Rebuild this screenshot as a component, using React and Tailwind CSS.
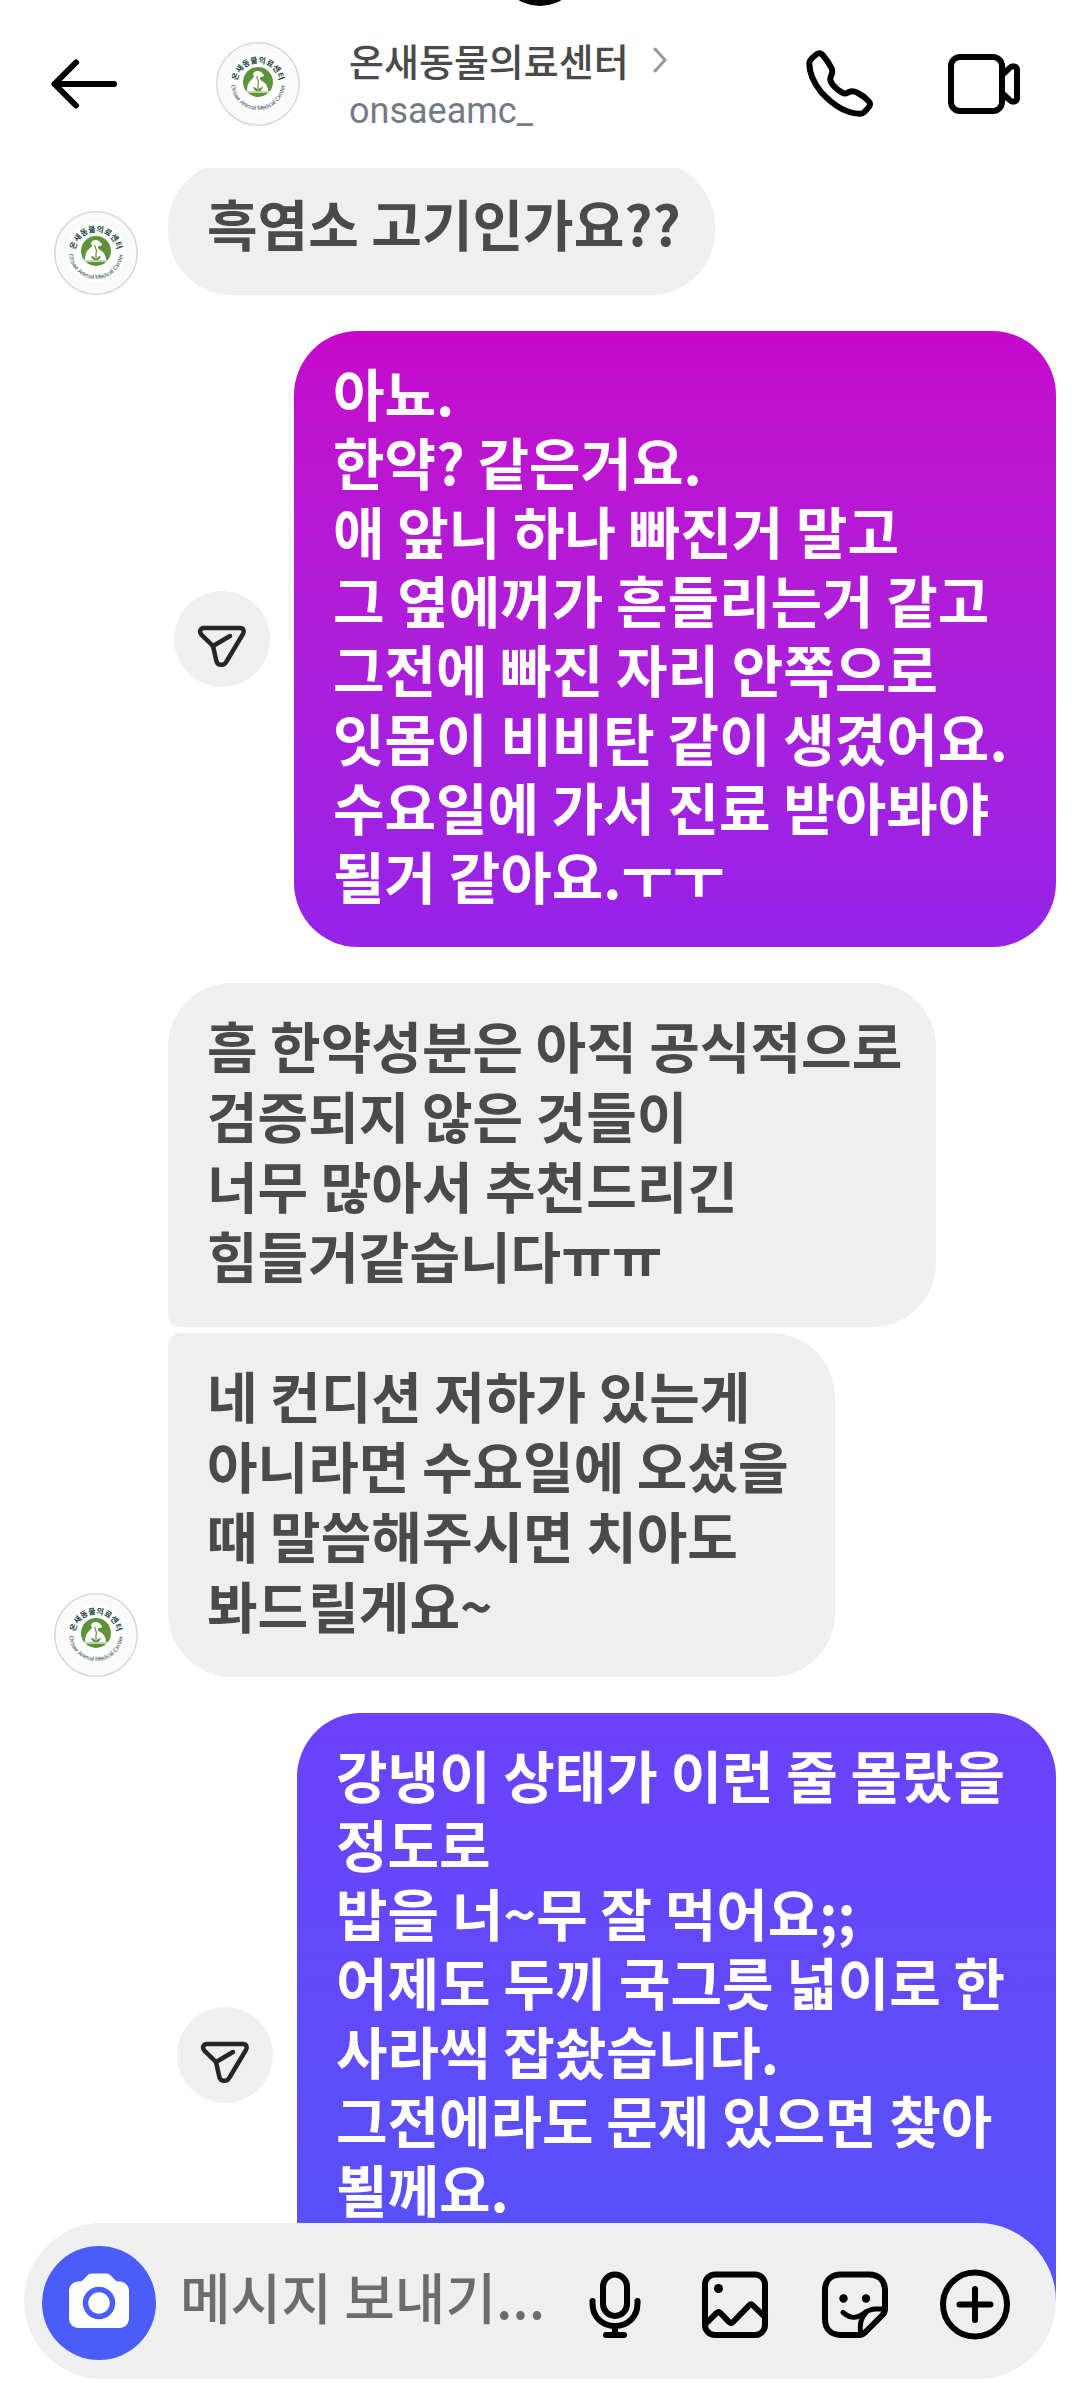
import React, { useState } from 'react';

const messages = [
  {
    id: 1,
    from: 'them',
    avatar: true,
    shape: 'rounded-[64px] leading-[69px]',
    text: '흑염소 고기인가요??',
  },
  {
    id: 2,
    from: 'me',
    shape: 'min-w-[762px] rounded-[64px] from-[#c507cb] to-[#9622e8]',
    text: '아뇨.\n한약? 같은거요.\n애 앞니 하나 빠진거 말고\n그 옆에꺼가 흔들리는거 같고\n그전에 빠진 자리 안쪽으로\n잇몸이 비비탄 같이 생겼어요.\n수요일에 가서 진료 받아봐야\n될거 같아요.ㅜㅜ',
  },
  {
    id: 3,
    from: 'them',
    shape: 'rounded-[64px] rounded-bl-xl leading-[70px]',
    text: '흠 한약성분은 아직 공식적으로\n검증되지 않은 것들이\n너무 많아서 추천드리긴\n힘들거같습니다ㅠㅠ',
  },
  {
    id: 4,
    from: 'them',
    avatar: true,
    joined: true,
    shape: 'min-w-[667px] rounded-[64px] rounded-tl-xl leading-[70px]',
    text: '네 컨디션 저하가 있는게\n아니라면 수요일에 오셨을\n때 말씀해주시면 치아도\n봐드릴게요~',
  },
  {
    id: 5,
    from: 'me',
    shape: 'min-h-[684px] min-w-[759px] rounded-[64px] from-[#6b41fd] to-[#5155fa]',
    text: '강냉이 상태가 이런 줄 몰랐을\n정도로\n밥을 너~무 잘 먹어요;;\n어제도 두끼 국그릇 넓이로 한\n사라씩 잡솼습니다.\n그전에라도 문제 있으면 찾아\n뵐께요.',
  },
];

function Icon({ children, className = 'size-[72px]' }) {
  return (
    <svg
      viewBox="0 0 72 72"
      className={className}
      fill="none"
      stroke="currentColor"
      strokeWidth="6"
      strokeLinecap="round"
      strokeLinejoin="round"
      aria-hidden="true"
    >
      {children}
    </svg>
  );
}

function Avatar({ id }) {
  return (
    <svg viewBox="0 0 84 84" className="size-[84px] shrink-0" role="img" aria-label="onsaeamc_">
      <defs>
        <path id={`top-${id}`} d="M21 42a21 21 0 0 1 42 0" />
        <path id={`bottom-${id}`} d="M15 41a27 27 0 0 0 54 0" />
      </defs>
      <circle cx="42" cy="42" r="41.2" fill="#fafafa" stroke="#d9d9d9" strokeWidth="1.5" />
      <circle cx="42" cy="41" r="30" fill="#fff" />
      <circle cx="42" cy="40" r="15" fill="#5f933a" />
      <path
        d="M31 49c0-5 1-8 4-11l3-3-1-3c1-3 5-4 8-2l3 3c0 2-2 2-4 2 0 2 0 3 2 4 4 2 6 6 6 10z"
        fill="#fff"
      />
      <path d="M41 34c-1 3 3 4 1 8v7" fill="none" stroke="#5f933a" strokeWidth="1.2" />
      <path d="M42 49c-1-3-3-4-5-4 1 3 3 5 5 4zm0 0c1-3 3-4 5-4-1 3-3 5-5 4z" fill="#5f933a" />
      <path d="M29 50h26" stroke="#fff" strokeWidth="1.2" />
      <text fill="#1b4943" textAnchor="middle" className="font-['Noto_Sans_CJK_KR',sans-serif] text-[8px] font-bold">
        <textPath href={`#top-${id}`} startOffset="50%">온새동물의료센터</textPath>
      </text>
      <text fill="#1b4943" textAnchor="middle" className="font-['Liberation_Sans',sans-serif] text-[6px] font-normal">
        <textPath href={`#bottom-${id}`} startOffset="50%">Onsae Animal Medical Center</textPath>
      </text>
    </svg>
  );
}

function ShareButton() {
  return (
    <button type="button" aria-label="공유" className="size-24 shrink-0 rounded-full bg-[#efefef] text-[#262626]">
      <svg viewBox="0 0 96 96" fill="none" stroke="currentColor" strokeWidth="4.5" strokeLinecap="round" strokeLinejoin="round">
        <path d="M30 37h36c3.500 0 4.500 3 3 5.800L52.500 70.500c-2.800 5-9.300 4.200-10.300-1.200L39 55 27.600 43.800c-2.800-2.800-1.400-6.800 2.400-6.800z" />
        <path d="M39 55L56 45" />
      </svg>
    </button>
  );
}

function Message({ message }) {
  const { id, from, text, shape, avatar, joined } = message;

  if (from === 'me') {
    return (
      <div className="mt-9 flex items-center justify-end gap-6 pr-6">
        <ShareButton />
        <p className={`bg-linear-to-b pt-[26px] pr-[34px] pb-[38px] pl-[39px] text-[56px] leading-[69px] whitespace-pre text-white ${shape}`}>
          {text}
        </p>
      </div>
    );
  }

  return (
    <div className={`flex items-end gap-[30px] pl-[54px] ${joined ? 'mt-1.5' : 'mt-9'}`}>
      {avatar ? <Avatar id={id} /> : <div className="w-[84px] shrink-0" />}
      <p className={`bg-[#efefef] pt-[26px] pr-[34px] pb-[38px] pl-[39px] whitespace-pre text-[#4a4a4a] ${shape}`}>
        {text}
      </p>
    </div>
  );
}

function Header() {
  return (
    <header className="relative flex h-[168px] shrink-0 items-center overflow-hidden bg-white pl-12 pr-[60px]">
      <div className="absolute -top-[78px] left-1/2 size-[84px] -translate-x-1/2 rounded-full bg-black" />
      <button type="button" aria-label="뒤로">
        <Icon>
          <path d="M66 36H6.500M28 14.500L6.500 36 28 57.500" />
        </Icon>
      </button>
      <a href="#profile" className="ml-24 flex items-center gap-[49px]">
        <Avatar id="header" />
        <div>
          <div className="flex items-center gap-6">
            <h1 className="text-[38px] leading-[54px] font-medium text-[#4a4a4a]">온새동물의료센터</h1>
            <svg viewBox="0 0 14 26" className="h-[26px] w-[14px]" fill="none" stroke="#999" strokeWidth="3" strokeLinecap="round">
              <path d="M2 2l10 11L2 24" />
            </svg>
          </div>
          <div className="font-[Roboto,sans-serif] text-[36px] leading-[48px] font-normal text-[#737a86]">onsaeamc_</div>
        </div>
      </a>
      <div className="ml-auto flex gap-[72px]">
        <button type="button" aria-label="음성 통화">
          <Icon>
            <path d="M5.300 15.300C5.300 12 8 10 11 7.500C14 4.500 17 4.500 19 7.500C22 11 25 15 27.500 20C29 23 28.500 25 27 28C25.500 31 26.500 34 29 37C32 41 35 43 39 45C41 46.200 43 45 45 44C48 42.500 50 42.800 53 44.500C57 46.500 61 49.500 64.500 53C66.500 55 66.500 57.500 64.500 59.500C62 62 60 65.700 57 65.700C40 66 27 55 17 44C9 34 5.300 26 5.300 15.300Z" />
          </Icon>
        </button>
        <button type="button" aria-label="영상 통화">
          <Icon>
            <rect x="3" y="9" width="51" height="54" rx="9" />
            <path d="M54 27l7-6.500c4-4 8-2 8 2v27c0 4-4 6-8 2L54 45" />
          </Icon>
        </button>
      </div>
    </header>
  );
}

function Composer() {
  const [draft, setDraft] = useState('');

  return (
    <form
      onSubmit={(e) => e.preventDefault()}
      className="relative mx-6 -mt-[78px] mb-[23px] flex h-[156px] shrink-0 items-center rounded-full bg-[#efefef] pt-1 pr-[45px] pl-[18px]"
    >
      <button type="button" aria-label="카메라" className="size-[114px] shrink-0 rounded-full bg-[#4a5df9]">
        <svg viewBox="0 0 114 114">
          <path
            d="M50 27.500h14c3 0 5 2 7 4.500 2 2.500 4 3.500 6 3.500 6 0 10 4 10 10V72c0 6-4 10-10 10H37c-6 0-10-4-10-10V45.500c0-6 4-10 10-10 2 0 4-1 6-3.500 2-2.500 4-4.500 7-4.500z"
            fill="#fff"
          />
          <circle cx="57" cy="57" r="13.500" fill="none" stroke="#4a5df9" strokeWidth="5.500" />
        </svg>
      </button>
      <input
        type="text"
        aria-label="메시지 보내기"
        placeholder="메시지 보내기..."
        value={draft}
        onChange={(e) => setDraft(e.target.value)}
        className="ml-6 w-0 min-w-0 flex-1 bg-transparent pb-4 leading-[69px] font-medium text-[#4a4a4a] outline-none placeholder:text-[#6c6c6c]"
      />
      <div className="flex shrink-0 gap-12 pt-1">
        <button type="button" aria-label="음성 메시지">
          <Icon>
            <rect x="24" y="5.500" width="24" height="41.500" rx="12" />
            <path d="M13.500 32v2.500C13.500 48 23.500 57 36 57s22.500-9 22.500-22.500V32M36 57v9M27 66h18" />
          </Icon>
        </button>
        <button type="button" aria-label="사진">
          <Icon>
            <rect x="6" y="5.500" width="60" height="60.500" rx="10" />
            <circle cx="19.500" cy="19.500" r="4.500" fill="currentColor" stroke="none" />
            <path d="M7 54.500l10.500-10.500c1.500-1.500 2.500-1.500 4 0l8.500 9c1.500 1.500 2.500 1.500 4 0L50 36.500c1.500-1.500 2.500-1.500 4 0L66 48" />
          </Icon>
        </button>
        <button type="button" aria-label="스티커">
          <Icon>
            <path d="M22 5.500h28c10 0 16 6 16 16V40c0 3-1 4.500-3 6.500L46 63.500c-2 2-3 2.500-5.500 2.500H22C12 66 6 60 6 50V21.500c0-10 6-16 16-16z" />
            <path strokeWidth="5" d="M24 43.500c7 6 13 6.500 20 1.500 5-4 8-5 13-5h8" />
            <path strokeWidth="5" d="M41.500 64c-1-9 0-15 5-19.500" />
            <circle cx="24.500" cy="29.500" r="4.200" fill="currentColor" stroke="none" />
            <circle cx="47" cy="29.500" r="4.200" fill="currentColor" stroke="none" />
          </Icon>
        </button>
        <button type="button" aria-label="더 보기">
          <Icon>
            <circle cx="36" cy="35.500" r="32" />
            <path d="M36 20v31M20.500 35.500h31" />
          </Icon>
        </button>
      </div>
    </form>
  );
}

function App() {
  return (
    <div className="flex h-screen flex-col overflow-hidden bg-white font-['Noto_Sans_CJK_KR',sans-serif] text-[55px]">
      <Header />
      <main className="min-h-0 flex-1 overflow-hidden font-bold">
        <div className="-mt-[42px]">
          {messages.map((message) => (
            <Message key={message.id} message={message} />
          ))}
        </div>
      </main>
      <Composer />
    </div>
  );
}

export default App;
